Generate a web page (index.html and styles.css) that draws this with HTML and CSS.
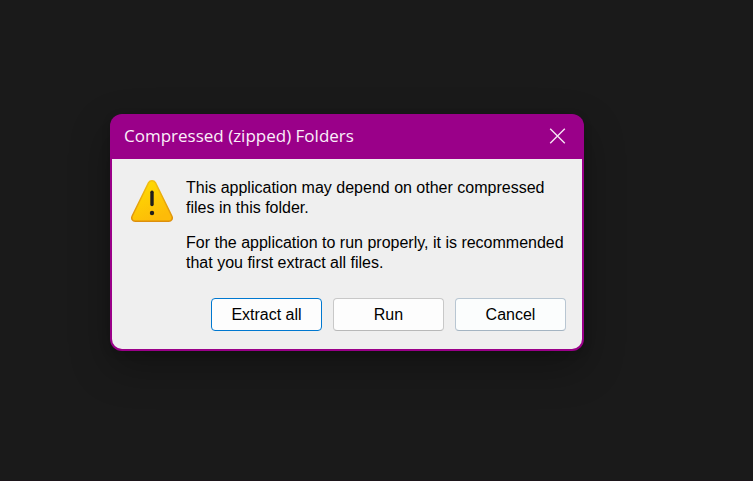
FILE: index.html
```html
<!DOCTYPE html>
<html lang="en">
<head>
<meta charset="utf-8">
<meta name="viewport" content="width=device-width, initial-scale=1">
<title>Compressed (zipped) Folders</title>
<link rel="stylesheet" href="styles.css">
</head>
<body>
<main class="desktop">
  <section class="dialog" role="alertdialog" aria-labelledby="dialog-title" aria-describedby="dialog-message">
    <header class="titlebar">
      <h1 class="title" id="dialog-title">Compressed (zipped) Folders</h1>
      <button class="close" type="button" aria-label="Close">
        <svg width="17" height="17" viewBox="0 0 17 17" aria-hidden="true">
          <path d="M1.2 .7 15.8 15.3M15.8 .7 1.2 15.3" fill="none" stroke="#f6e4f4" stroke-width="1.4"/>
        </svg>
      </button>
    </header>
    <div class="panel">
      <div class="content">
        <svg class="warning" width="42" height="44" viewBox="0 0 42 44" aria-hidden="true">
          <defs>
            <linearGradient id="fill" x1="0" y1="0" x2="0.5" y2="1">
              <stop offset="0" stop-color="#ffe000"/>
              <stop offset="1" stop-color="#fdbb08"/>
            </linearGradient>
            <linearGradient id="edge" x1="0" y1="0" x2="0" y2="1">
              <stop offset="0" stop-color="#f2c010"/>
              <stop offset="1" stop-color="#dd8f0c"/>
            </linearGradient>
          </defs>
          <path d="M17.6 4.6C19 2 23 2 24.4 4.6L40.8 38C42 40.6 40.6 43.2 37.8 43.2H4.2C1.4 43.2 0 40.6 1.2 38Z" fill="url(#fill)" stroke="url(#edge)" stroke-width="1.5"/>
          <path d="M21 14.2V26.6" stroke="#201e1c" stroke-width="3.4" stroke-linecap="round"/>
          <circle cx="21" cy="35" r="2.2" fill="#201e1c"/>
        </svg>
        <div class="message" id="dialog-message">
          <p>This application may depend on other compressed files in this folder.</p>
          <p>For the application to run properly, it is recommended that you first extract all files.</p>
        </div>
      </div>
      <footer class="actions">
        <button class="button button-default" type="button">Extract all</button>
        <button class="button" type="button">Run</button>
        <button class="button button-cancel" type="button">Cancel</button>
      </footer>
    </div>
  </section>
</main>
</body>
</html>
```
FILE: styles.css
```css
* {
  box-sizing: border-box;
}

body {
  margin: 0;
  background: #1a1a1a;
  font-family: "Liberation Sans", Arial, sans-serif;
  font-size: 16px;
  line-height: 20px;
  color: #000;
}

.desktop {
  display: flex;
  justify-content: center;
  align-items: center;
  min-height: 100vh;
  padding: 0 59px 16px 0;
  border-bottom: 1px solid #1c151a;
}

.dialog {
  width: 100%;
  max-width: 474px;
  padding: 0 2px 2px;
  border-radius: 12px;
  background: #9a0089;
  box-shadow: 0 16px 40px rgba(0, 0, 0, 0.3), 0 2px 8px rgba(0, 0, 0, 0.15);
}

.titlebar {
  display: flex;
  justify-content: space-between;
  align-items: center;
  height: 45px;
  padding: 0 16px 0 12px;
}

.title {
  margin: 0;
  font-family: "Open Sans", "Segoe UI", sans-serif;
  font-size: 17px;
  font-weight: 400;
  line-height: 24px;
  color: #fbeffa;
}

.close {
  display: flex;
  padding: 0;
  border: 0;
  background: none;
}

.panel {
  border-radius: 0 0 10px 10px;
  background: #efefef;
}

.content {
  display: flex;
  gap: 13px;
  padding: 19px 16px 25px 19px;
}

.warning {
  flex: none;
}

.message {
  flex: 1;
}

.message p {
  margin: 0;
}

.message p + p {
  margin-top: 15px;
}

.actions {
  display: flex;
  justify-content: flex-end;
  gap: 11px;
  padding: 0 16px 18px;
}

.button {
  width: 111px;
  height: 33px;
  padding: 1px 0 0;
  border: 1px solid #c8c8c8;
  border-bottom-color: #b8b8b8;
  border-radius: 4px;
  background: #fdfdfd;
  font: inherit;
  color: inherit;
}

.button-default {
  border-color: #0078d0;
}

.button-cancel {
  border-color: #b8c6d2;
  border-bottom-color: #a4b4c2;
  background: #fbfdfd;
}
```
